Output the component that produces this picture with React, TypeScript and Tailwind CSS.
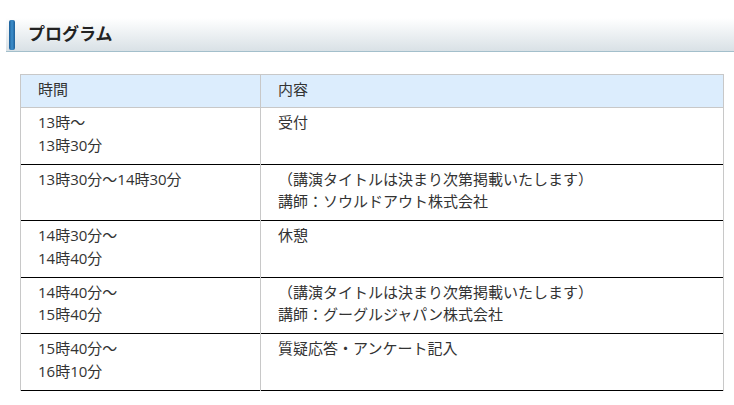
import React from 'react';

const rows: { time: string[]; content: string[] }[] = [
  { time: ['13時～', '13時30分'], content: ['受付'] },
  { time: ['13時30分～14時30分'], content: ['（講演タイトルは決まり次第掲載いたします）', '講師：ソウルドアウト株式会社'] },
  { time: ['14時30分～', '14時40分'], content: ['休憩'] },
  { time: ['14時40分～', '15時40分'], content: ['（講演タイトルは決まり次第掲載いたします）', '講師：グーグルジャパン株式会社'] },
  { time: ['15時40分～', '16時10分'], content: ['質疑応答・アンケート記入'] },
];

export default function App() {
  return (
    <div
      className="w-[734px] h-[405px] bg-white text-[#333] overflow-hidden"
      style={{ fontFamily: '"Open Sans", "Noto Sans CJK JP", sans-serif' }}
    >
      {/* section heading */}
      <div className="mt-[18px] ml-[6px] h-[34px] flex items-center bg-gradient-to-b from-white to-[#d9e1e6] border-b border-[#a3bfcb]">
        <div className="ml-[3px] w-[6px] h-[30px] rounded-[2px] bg-gradient-to-r from-[#1d5f98] via-[#3d8fcc] to-[#1d5f98]" />
        <h2 className="ml-[13px] mb-[3px] text-[17px] font-bold text-[#222] leading-none">プログラム</h2>
      </div>

      <table className="mt-[22px] ml-[20px] w-[704px] border-collapse text-[15px] leading-[22.5px]">
        <thead>
          <tr className="bg-[#dcedfd]">
            <th className="w-[240px] h-[33px] border border-[#c8c8c8] pl-[17px] pb-[4px] text-left font-normal">時間</th>
            <th className="border border-[#c8c8c8] pl-[17px] pb-[4px] text-left font-normal">内容</th>
          </tr>
        </thead>
        <tbody>
          {rows.map((r, i) => (
            <tr key={i} className="h-[56.6px] border-b border-b-black">
              <td className="align-top pt-[3px] pl-[17px] border-l border-r border-[#c8c8c8]">
                {r.time.map((t) => (
                  <div key={t}>{t}</div>
                ))}
              </td>
              <td className="align-top pt-[3px] pl-[17px] border-r border-[#c8c8c8]">
                {r.content.map((t) => (
                  <div key={t}>{t}</div>
                ))}
              </td>
            </tr>
          ))}
        </tbody>
      </table>
    </div>
  );
}
